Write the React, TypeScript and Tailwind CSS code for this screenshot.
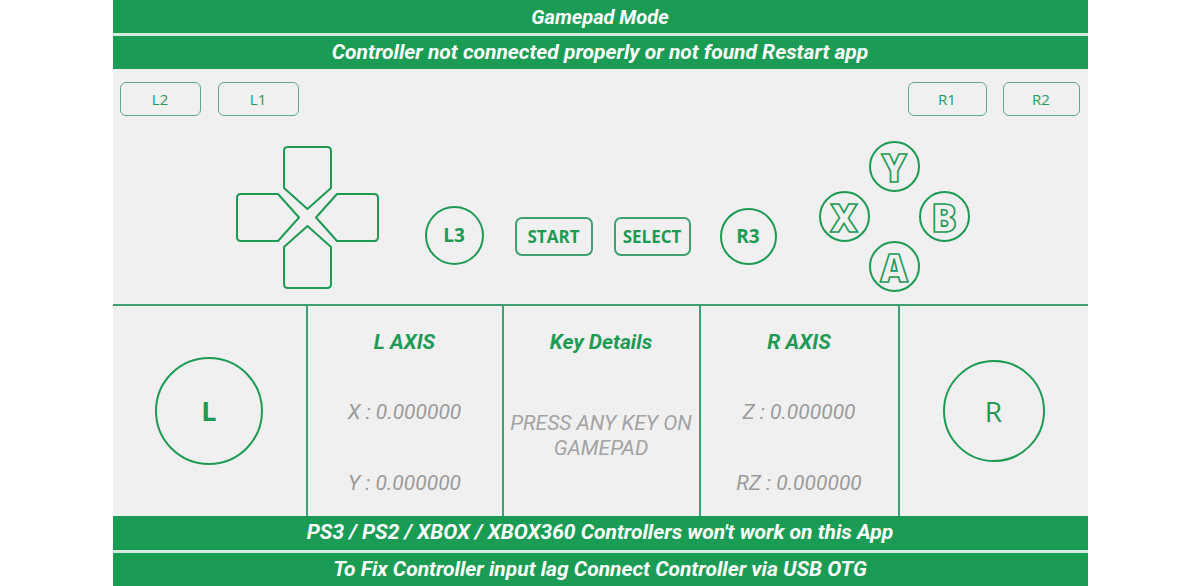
import React from 'react'

function Bar({ text, className = '' }: { text: string; className?: string }) {
  return (
    <div className={`flex items-center justify-center bg-[#1b9c55] text-white font-bold italic ${className}`}>
      {text}
    </div>
  )
}

function Shoulder({ label, className = '' }: { label: string; className?: string }) {
  return (
    <div className={`flex h-[34px] items-center justify-center rounded-[6px] border-[1.5px] border-[#62a88d] text-[15px] text-[#2b9760] [font-family:'Open_Sans',sans-serif] ${className}`}>
      {label}
    </div>
  )
}

function DPad() {
  const arm = 'M48,5 Q48,1 52,1 L91,1 Q95,1 95,5 L95,42 L71.5,63 L48,42 Z'
  return (
    <svg width="145" height="145" viewBox="-1 -1 145 145" className="mt-[4px]">
      {[0, 90, 180, 270].map(r => (
        <path key={r} d={arm} transform={`rotate(${r} 71.5 71.5)`} fill="none" stroke="#1e9a55" strokeWidth="2" strokeLinejoin="round" />
      ))}
    </svg>
  )
}

function Face({ letter, className = '' }: { letter: string; className?: string }) {
  return (
    <div className={`flex h-[51px] w-[51px] items-center justify-center rounded-full border-2 border-[#1e9a55] ${className}`}>
      <span className="text-[38px] font-extrabold leading-none text-transparent [-webkit-text-stroke:1.6px_#1e9a55] [font-family:'Open_Sans',sans-serif]">
        {letter}
      </span>
    </div>
  )
}

function Pill({ label, className = '' }: { label: string; className?: string }) {
  return (
    <div className={`flex h-[39px] items-center justify-center rounded-[7px] border-2 border-[#3fa073] text-[17px] font-bold text-[#1e9a55] [font-family:'Open_Sans',sans-serif] ${className}`}>
      {label}
    </div>
  )
}

function Stick({ label, className = '' }: { label: string; className?: string }) {
  return (
    <div className={`flex items-center justify-center rounded-full border-2 border-[#1e9a55] text-[#1e9a55] [font-family:'Open_Sans',sans-serif] ${className}`}>
      {label}
    </div>
  )
}

function AxisColumn({ title, a, b }: { title: string; a: string; b: string }) {
  return (
    <div className="flex flex-col items-center border-r-2 border-[#3fa073] pt-[24px]">
      <div className="h-[24px] text-[21px] font-bold italic leading-[24px] text-[#1e9a55]">{title}</div>
      <div className="mt-[46px] h-[24px] text-[21px] italic leading-[24px] text-[#9a9a9a]">{a}</div>
      <div className="mt-[47px] h-[24px] text-[21px] italic leading-[24px] text-[#9a9a9a]">{b}</div>
    </div>
  )
}

export default function App() {
  return (
    <div className="flex h-[586px] w-full justify-center bg-white [font-family:Roboto,'Noto_Sans',sans-serif]">
      <div className="flex w-[975px] flex-col bg-[#f0f0f0]">
        <Bar text="Gamepad Mode" className="h-[33px] text-[20px]" />
        <div className="h-[3px] bg-[#d4ece0]" />
        <Bar text="Controller not connected properly or not found Restart app" className="h-[33px] text-[21px]" />

        <div className="flex h-[235px] flex-col">
          <div className="flex items-start justify-between pl-[7px] pr-[8px] pt-[13px]">
            <div className="flex gap-[17px]">
              <Shoulder label="L2" className="w-[81px]" />
              <Shoulder label="L1" className="w-[81px]" />
            </div>
            <div className="flex gap-[16px]">
              <Shoulder label="R1" className="w-[79px]" />
              <Shoulder label="R2" className="w-[77px]" />
            </div>
          </div>

          <div className="mt-[25px] flex items-start pl-[122px]">
            <DPad />
            <Stick label="L3" className="ml-[45px] mt-[65px] h-[59px] w-[59px] text-[19px] font-bold" />
            <Pill label="START" className="ml-[31px] mt-[76px] w-[78px]" />
            <Pill label="SELECT" className="ml-[21px] mt-[76px] w-[77px]" />
            <Stick label="R3" className="ml-[29px] mt-[67px] h-[57px] w-[57px] text-[19px] font-bold" />
            <div className="ml-[42px] grid grid-cols-[50px_50px_51px] grid-rows-[50px_50px_51px]">
              <Face letter="Y" className="col-start-2 row-start-1" />
              <Face letter="X" className="col-start-1 row-start-2" />
              <Face letter="B" className="col-start-3 row-start-2" />
              <Face letter="A" className="col-start-2 row-start-3" />
            </div>
          </div>
        </div>

        <div className="grid h-[212px] grid-cols-[195px_196px_197px_199px_1fr] border-t-2 border-[#3fa073]">
          <div className="flex items-center justify-center border-r-2 border-[#3fa073]">
            <Stick label="L" className="h-[108px] w-[108px] text-[27px] font-bold" />
          </div>
          <AxisColumn title="L AXIS" a="X : 0.000000" b="Y : 0.000000" />
          <div className="flex flex-col items-center border-r-2 border-[#3fa073] pt-[24px]">
            <div className="h-[24px] text-[21px] font-bold italic leading-[24px] text-[#1e9a55]">Key Details</div>
            <div className="mt-[57px] whitespace-nowrap text-center text-[21px] italic leading-[25px] text-[#a3a3a3]">
              PRESS ANY KEY ON
              <br />
              GAMEPAD
            </div>
          </div>
          <AxisColumn title="R AXIS" a="Z : 0.000000" b="RZ : 0.000000" />
          <div className="flex items-center justify-center">
            <Stick label="R" className="h-[102px] w-[102px] text-[28px] font-normal" />
          </div>
        </div>

        <Bar text="PS3 / PS2 / XBOX / XBOX360 Controllers won't work on this App" className="h-[34px] text-[21px]" />
        <div className="h-[3px] bg-[#d4ece0]" />
        <Bar text="To Fix Controller input lag Connect Controller via USB OTG" className="h-[33px] text-[21px]" />
      </div>
    </div>
  )
}
